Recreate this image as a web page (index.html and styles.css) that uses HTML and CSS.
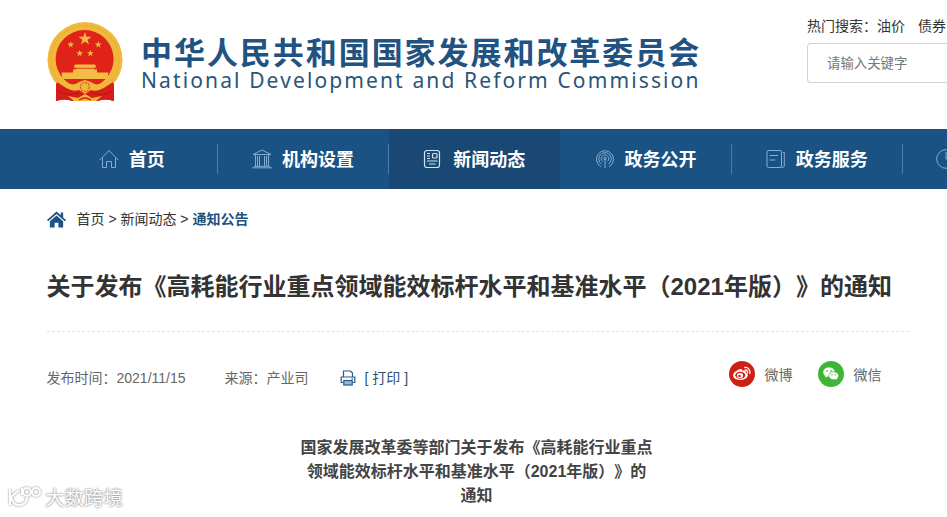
FILE: index.html
```
<!DOCTYPE html>
<html lang="zh-CN">
<head>
  <meta charset="UTF-8">
  <title>通知公告</title>
  <link rel="stylesheet" href="styles.css">
</head>
<body>
  <header class="header">
    <svg class="emblem" viewBox="0 0 76 81">
      <defs>
        <path id="star" d="M0-10 2.3-3.1 9.5-3.1 3.7 1.2 5.9 8.1 0 3.8-5.9 8.1-3.7 1.2-9.5-3.1-2.3-3.1z"/>
      </defs>
      <path d="M9 58Q19 64 32 59H44Q57 64 67 58V79Q59 76 50 79H26Q17 76 9 79z" fill="#d81c17"/>
      <circle cx="38" cy="37.600" r="37.500" fill="#f0b93c"/>
      <circle cx="38" cy="37.600" r="34" fill="none" stroke="#dda02f" stroke-width=".8" stroke-dasharray="2 1.5"/>
      <circle cx="37.6" cy="37" r="29" fill="#e02318"/>
      <g fill="#f3bd45">
        <use href="#star" transform="translate(38 17) scale(.69)"/>
        <use href="#star" transform="translate(23.7 22.7) scale(.36)"/>
        <use href="#star" transform="translate(51.3 22.7) scale(.36)"/>
        <use href="#star" transform="translate(32.7 31.3) scale(.36)"/>
        <use href="#star" transform="translate(43.3 31.3) scale(.36)"/>
        <path d="M28 42.5h20l1.5 3h-2v2H50v3h11.5l-1 6.5h-45l-1-6.5H26v-3h2.500v-2h-2z"/>
      </g>
      <path d="M27.500 46.300h21" stroke="#e02318" stroke-width=".8"/>
      <path d="M10 60Q22 69 33 67L38 71 43 67Q54 69 66 60L67 79Q59 76 50 79H26Q17 76 9 79z" fill="#d81c17"/>
      <path d="M14 57Q25 66 32 60L38 58 44 60Q51 66 62 57L64 60Q54 71 44 68L38 72 32 68Q22 71 12 60z" fill="#f0b93c"/>
      <path d="M11 69Q20 75 31 71M65 69Q56 75 45 71" fill="none" stroke="#b81416" stroke-width="1"/>
      <path d="M21 74l10 2 7-4 7 4 10-2-6 5H27z" fill="#f0b93c"/>
      <circle cx="38" cy="65" r="4.500" fill="#f0b93c" stroke="#da5b23" stroke-width="1.3" stroke-dasharray="2 1"/>
      <path d="M32 78q6-4 12 0" fill="none" stroke="#d81c17" stroke-width="1.300"/>
    </svg>
    <div class="brand">
      <div class="brand-cn">中华人民共和国国家发展和改革委员会</div>
      <div class="brand-en">National Development and Reform Commission</div>
    </div>
    <div class="search">
      <div class="hot"><span>热门搜索：油价</span><span>债券</span></div>
      <input type="text" placeholder="请输入关键字">
    </div>
  </header>

  <nav class="nav">
    <a class="nav-item">
      <svg viewBox="0 0 20 20"><path d="M.7 11 10 1.500 19.300 11M3.500 9v9.500H7.500V12.500h5v6h4V9"/></svg>
      首页
    </a>
    <a class="nav-item">
      <svg viewBox="0 0 20 20"><path d="M10 1 1 5.500H19zM3.500 5.500V17M7.500 7V17M12.500 7V17M16.500 5.500V17M5.500 7V17M14.500 7V17M2 17.300H18M0 18.800H20"/></svg>
      机构设置
    </a>
    <a class="nav-item active">
      <svg viewBox="0 0 20 20"><rect x="1.500" y="1.500" width="15" height="17" rx="2.500"/><rect x="9.500" y="4.500" width="4.500" height="4.500" rx="1"/><path d="M4 4.500h3M4 7h3M4 9.500h3M4 12h10.500M6 15h6.500"/></svg>
      新闻动态
    </a>
    <a class="nav-item">
      <svg viewBox="0 0 20 20"><path d="M6 17.700A8.500 8.500 0 1 1 14 17.700M6.500 15A6.200 6.200 0 1 1 13.500 15M7.600 12.500A3.700 3.700 0 1 1 12.400 12.500M10 9v10"/><circle cx="10" cy="9.500" r="1.200"/></svg>
      政务公开
    </a>
    <a class="nav-item">
      <svg viewBox="0 0 20 20"><rect x="1" y="1.500" width="14.500" height="17" rx="1.500"/><path d="M17 3.500h1.300V17q0 1.500-2.800 1.500M3.500 6.500h8.500M3.500 11h6"/></svg>
      政务服务
    </a>
    <a class="nav-item last" aria-label="更多">
      <svg viewBox="0 0 20 20"><circle cx="10" cy="10" r="9.300"/><path d="M10 3v7h5"/></svg>
    </a>
  </nav>

  <main class="main">
    <div class="crumbs">
      <svg viewBox="0 0 20 17"><path d="M10 0 0 9l1.200 1.300L10 2.700l8.800 7.600L20 9l-3-2.700V1h-2.600v3z"/><path d="M10 4.300 3 10.300V17h5v-5h4v5h5v-6.700z"/></svg>
      <span>首页 &gt; 新闻动态 &gt; <b>通知公告</b></span>
    </div>

    <h1>关于发布《高耗能行业重点领域能效标杆水平和基准水平（2021年版）》的通知</h1>

    <div class="meta">
      <span class="date">发布时间：2021/11/15</span>
      <span class="source">来源：产业司</span>
      <a class="print">
        <svg viewBox="0 0 16 16"><path d="M3.500 7V1h7l2 2v4M3.500 12.500H1.200V7h13.600v5.500h-2.300"/><rect x="3.800" y="10.500" width="8.400" height="4.500" fill="#9db6cc"/><path d="M11.500 8.800h1.500"/></svg>
        [ 打印 ]
      </a>
      <div class="share">
        <a>
          <svg viewBox="0 0 26 26">
            <circle cx="13" cy="13" r="13" fill="#cc2216"/>
            <path d="M11 8.200c1.500-.6 2.600 0 2.200 1.700 2.300-.8 4-.2 3.400 1.700 1.500.5 2.300 1.500 2.100 2.800-.5 2.800-3.800 4.500-7.600 4.500-4 0-7-1.900-7-4.700 0-2.200 3.500-5.300 6.900-6z" fill="#fff"/>
            <ellipse cx="11.300" cy="14.300" rx="5" ry="3.500" fill="#cc2216"/>
            <ellipse cx="11" cy="14.500" rx="3" ry="2.600" fill="#fff"/>
            <circle cx="10.500" cy="15" r="1.300" fill="#cc2216"/>
            <path d="M15.800 6.500a4.700 4.700 0 0 1 5 6M16.200 9a2.300 2.300 0 0 1 2.400 2.800" fill="none" stroke="#fff" stroke-width="1.300" stroke-linecap="round"/>
          </svg>
          微博
        </a>
        <a>
          <svg viewBox="0 0 26 26">
            <circle cx="13" cy="13" r="13" fill="#3fb535"/>
            <path d="M11 6.500c-3.300 0-5.700 2.100-5.700 4.700 0 1.600.8 2.900 2.100 3.700L7 16.800l2.200-1.200c4.200.9 7.500-1.300 7.500-4.400 0-2.600-2.400-4.700-5.700-4.700z" fill="#fff"/>
            <path d="M15.700 10.800c-2.800 0-4.900 1.800-4.900 4s2.100 4 4.900 4l1.400-.2 2 1.100-.4-1.700c1.200-.8 1.900-1.900 1.900-3.200 0-2.200-2.100-4-4.900-4z" fill="#fff" stroke="#3fb535" stroke-width=".7"/>
            <g fill="#3fb535"><circle cx="9" cy="9.900" r=".8"/><circle cx="13" cy="9.900" r=".8"/><circle cx="14" cy="13.800" r=".7"/><circle cx="17.300" cy="13.800" r=".7"/></g>
          </svg>
          微信
        </a>
      </div>
    </div>

    <h2>国家发展改革委等部门关于发布《高耗能行业重点<br>领域能效标杆水平和基准水平（2021年版）》的<br>通知</h2>
  </main>

  <div class="watermark">
    <svg viewBox="0 0 36 26"><path d="M3 4v16M12 5 4 12M4 12q2 9 9 8t7-8M15 10V3"/><circle cx="20" cy="7" r="4"/><circle cx="29" cy="7" r="4"/></svg>
    <span>大数跨境</span>
  </div>
</body>
</html>
```
FILE: styles.css
```
* { box-sizing: border-box; }
body { margin: 0; height: 517px; overflow: hidden; background: #fff; color: #333; font: 14px "Liberation Sans", "Noto Sans CJK SC", sans-serif; text-spacing-trim: space-all; }

.header { display: flex; height: 129px; padding-left: 47px; }
.emblem { flex: none; width: 76px; height: 81px; margin-top: 22px; }
.brand { flex: none; width: 665px; padding: 34px 0 0 18px; color: #215282; white-space: nowrap; }
.brand-cn { font-size: 31px; font-weight: bold; line-height: 40px; letter-spacing: 1.95px; }
.brand-en { font: 21px/21px "Noto Sans", sans-serif; letter-spacing: 2.12px; margin-top: -4px; color: #2a5578; }
.search { flex: 1; min-width: 0; padding: 16px 0 0 19px; overflow: hidden; }
.hot { display: flex; gap: 13px; line-height: 20px; white-space: nowrap; }
.search input { display: block; width: 100%; height: 40px; margin-top: 7px; padding: 0 0 3px 19px; border: 1px solid #d3d3d3; border-right: none; border-radius: 4px 0 0 4px; font: 13.4px "Noto Sans CJK SC", sans-serif; }
.search input::placeholder { color: #777; }

.nav { display: flex; height: 60px; padding-left: 46.500px; background: #1a5283; overflow: hidden; }
.nav-item { position: relative; flex: none; display: flex; align-items: center; justify-content: center; gap: 10px; width: 171.3px; padding: 0 1px 2px 0; color: #fff; font-size: 18px; font-weight: bold; white-space: nowrap; }
.nav-item::after { content: ""; position: absolute; right: 0; top: 15px; width: 1px; height: 30px; background: #4a7da8; }
.nav-item svg { flex: none; width: 20px; height: 20px; margin-top: 1px; fill: none; stroke: #86add0; stroke-width: 1; }
.nav-item.active { background: #184873; }
.nav-item.active::after { display: none; }
.nav-item.active svg { stroke: #d5e4f0; stroke-width: 1.2; }
.nav-item.last { flex: 1; justify-content: flex-start; padding-left: 33px; }
.nav-item.last::after { display: none; }

.main { width: 862px; margin-left: 46.500px; }
.crumbs { display: flex; align-items: center; gap: 11px; height: 60px; }
.crumbs svg { width: 19px; height: 17px; fill: #1d5287; }
.crumbs span { margin-top: -2px; }
.crumbs b { color: #205380; }
h1 { margin: 0; padding: 20px 0 26px; border-bottom: 1px dashed #e2e2e2; font-size: 24px; line-height: 36px; white-space: nowrap; }

.meta { display: flex; align-items: center; height: 94px; padding-bottom: 4px; color: #666; }
.source { margin-left: 39px; }
.print { display: flex; align-items: center; gap: 9px; margin-left: 31px; color: #2c5375; }
.print svg { width: 16px; height: 16px; margin-top: 2px; fill: none; stroke: #2b5b88; stroke-width: 1.2; }
.share { display: flex; gap: 25px; margin: -6px 27px 0 auto; }
.share a { display: flex; align-items: center; gap: 10px; }
.share svg { width: 26px; height: 26px; }

h2 { margin: 10px 0 0; padding-right: 2px; color: #444; font-size: 16px; line-height: 24px; text-align: center; }

.watermark { position: absolute; left: 7px; top: 485px; display: flex; align-items: center; gap: 2px; color: #fff; font-size: 19.5px; line-height: 26px; text-shadow: 0 0 2px #888, 0 0 2px #999; }
.watermark svg { width: 36px; height: 26px; fill: none; stroke: #fff; stroke-width: 2; filter: drop-shadow(0 0 1px #888); }
```
